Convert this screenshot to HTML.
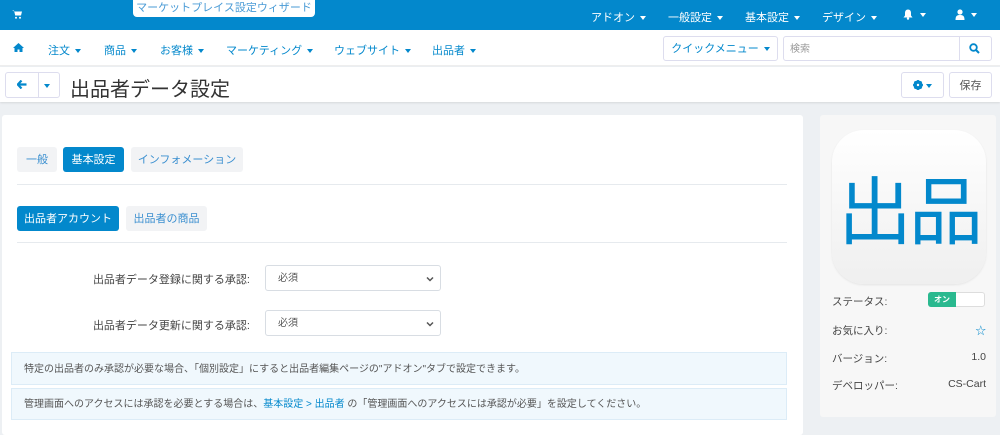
<!DOCTYPE html>
<html><head><meta charset="utf-8"><style>
*{box-sizing:border-box;margin:0;padding:0}
body{width:1000px;height:427px;overflow:hidden;background:#edf0f3;font-family:"Liberation Sans","Noto Sans CJK JP",sans-serif;font-size:11px;color:#333;position:relative}
.abs{position:absolute}
.top{left:0;top:0;width:1000px;height:30px;background:#0388cc;color:#fff}
.car{border-left:3.5px solid transparent;border-right:3.5px solid transparent;border-top:4px solid currentColor;display:inline-block;vertical-align:middle;margin-left:5px}
.nav{left:0;top:30px;width:1000px;height:36px;background:#fff;border-bottom:1px solid #eee;color:#0388cc}
.hdr{left:0;top:67px;width:1000px;height:35px;background:#fff;box-shadow:0 1px 2px rgba(0,0,0,.1)}
.btn{position:absolute;border:1px solid #dde;border-radius:3px;background:#fff}
.card{background:#fff;border-radius:3px}
.tab{position:absolute;height:25px;line-height:25px;border-radius:3px;background:#f2f3f5;color:#3a8fd0;text-align:center;font-size:11px;padding-top:1px}
.tab.on{background:#0388cc;color:#fff}
.sel{position:absolute;left:265px;width:176px;height:26px;border:1px solid #d8dde3;border-radius:3px;padding-left:12px;line-height:26px;color:#555;font-size:10px}
.sel svg{position:absolute;right:6px;top:10px}
.lbl{position:absolute;right:750px;font-size:11px;color:#444}
.info{position:absolute;left:11px;width:776px;background:#f0f8fd;border:1px solid #dcecf7;color:#555;font-size:10px;padding-left:12px}
.row{position:absolute;left:832px;width:154px;font-size:10.5px;color:#444}
</style></head><body>
<div class="abs top">
 <svg class="abs" style="left:12px;top:10px" width="10" height="9" viewBox="0 0 10 9"><path d="M0 0.5h2l1.2 5h5.8l1-4H2.6z" fill="#fff"/><circle cx="4" cy="7.8" r="1" fill="#fff"/><circle cx="8" cy="7.8" r="1" fill="#fff"/></svg>
 <div class="abs" style="left:133px;top:-2px;width:182px;height:19px;background:#fff;border-radius:0 0 4px 4px;color:#4a9bd6;font-size:11px;text-align:center;line-height:21px">マーケットプレイス設定ウィザード</div>
 <div class="abs" style="left:591px;top:9px;font-size:11px">アドオン<span class="car"></span></div>
 <div class="abs" style="left:668px;top:9px;font-size:11px">一般設定<span class="car"></span></div>
 <div class="abs" style="left:745px;top:9px;font-size:11px">基本設定<span class="car"></span></div>
 <div class="abs" style="left:822px;top:9px;font-size:11px">デザイン<span class="car"></span></div>
 <svg class="abs" style="left:903px;top:9px" width="10" height="11" viewBox="0 0 10 11"><path d="M5 0.5C3 0.5 2 2 2 4v2.5L0.5 8.5h9L8 6.5V4C8 2 7 0.5 5 0.5z" fill="#fff"/><circle cx="5" cy="9.6" r="1.2" fill="#fff"/></svg>
 <span class="car abs" style="left:915px;top:13px;color:#fff"></span>
 <svg class="abs" style="left:955px;top:9px" width="10" height="11" viewBox="0 0 10 11"><circle cx="5" cy="3" r="2.6" fill="#fff"/><path d="M0.5 11c0-4 1.5-5 4.5-5s4.5 1 4.5 5z" fill="#fff"/></svg>
 <span class="car abs" style="left:966px;top:13px;color:#fff"></span>
</div>
<div class="abs nav">
 <svg class="abs" style="left:13px;top:13px" width="11" height="9" viewBox="0 0 11 9"><path d="M5.5 0L0 5h1.5v4h3V6.5h2V9h3V5H11z" fill="#0388cc"/></svg>
 <div class="abs" style="left:48px;top:12px">注文<span class="car"></span></div>
 <div class="abs" style="left:104px;top:12px">商品<span class="car"></span></div>
 <div class="abs" style="left:160px;top:12px">お客様<span class="car"></span></div>
 <div class="abs" style="left:226px;top:12px">マーケティング<span class="car"></span></div>
 <div class="abs" style="left:334px;top:12px">ウェブサイト<span class="car"></span></div>
 <div class="abs" style="left:432px;top:12px">出品者<span class="car"></span></div>
 <div class="btn" style="left:663px;top:6px;width:115px;height:25px;line-height:25px;text-align:center">クイックメニュー<span class="car"></span></div>
 <div class="btn" style="left:783px;top:6px;width:209px;height:25px;line-height:25px;padding-left:6px;color:#999;font-size:10px">検索</div>
 <div class="abs" style="left:959px;top:7px;width:1px;height:23px;background:#dde"></div>
 <svg class="abs" style="left:969px;top:13px" width="11" height="11" viewBox="0 0 11 11"><circle cx="4.5" cy="4.5" r="3.3" fill="none" stroke="#0388cc" stroke-width="1.8"/><path d="M7 7l3 3" stroke="#0388cc" stroke-width="2"/></svg>
</div>
<div class="abs hdr">
 <div class="btn" style="left:5px;top:5px;width:55px;height:26px"></div>
 <div class="abs" style="left:38px;top:5px;width:1px;height:26px;background:#dde"></div>
 <svg class="abs" style="left:17px;top:13px" width="10" height="9" viewBox="0 0 10 9"><path d="M4.5 0.5L0.8 4.5l3.7 4M1 4.5h8.5" fill="none" stroke="#0388cc" stroke-width="2.2"/></svg>
 <span class="car abs" style="left:39px;top:17px;color:#0388cc"></span>
 <div class="abs" style="left:70px;top:6px;font-size:20px;color:#333">出品者データ設定</div>
 <div class="btn" style="left:901px;top:5px;width:43px;height:26px"></div>
 <svg class="abs" style="left:913px;top:13px" width="10" height="10" viewBox="0 0 10 10"><circle cx="5" cy="5" r="3.4" fill="none" stroke="#0388cc" stroke-width="2.4"/><path d="M5 0v10M0 5h10M1.5 1.5l7 7M8.5 1.5l-7 7" stroke="#0388cc" stroke-width="1.8"/><circle cx="5" cy="5" r="1.2" fill="#fff"/></svg>
 <span class="car abs" style="left:921px;top:17px;color:#0388cc"></span>
 <div class="btn" style="left:949px;top:5px;width:43px;height:26px;text-align:center;line-height:26px;color:#555">保存</div>
</div>
<div class="abs card" style="left:2px;top:115px;width:801px;height:320px"></div>
<div class="tab" style="left:17px;top:147px;width:40px">一般</div>
<div class="tab on" style="left:63px;top:147px;width:61px">基本設定</div>
<div class="tab" style="left:131px;top:147px;width:112px">インフォメーション</div>
<div class="abs" style="left:17px;top:184px;width:770px;height:1px;background:#e6eaee"></div>
<div class="tab on" style="left:17px;top:206px;width:102px">出品者アカウント</div>
<div class="tab" style="left:126px;top:206px;width:81px">出品者の商品</div>
<div class="abs" style="left:17px;top:242px;width:770px;height:1px;background:#e6eaee"></div>
<div class="lbl" style="top:271px">出品者データ登録に関する承認:</div>
<div class="sel" style="top:265px">必須<svg width="8" height="6" viewBox="0 0 8 6"><path d="M1 1.5l3 3 3-3" fill="none" stroke="#555" stroke-width="1.5"/></svg></div>
<div class="lbl" style="top:317px">出品者データ更新に関する承認:</div>
<div class="sel" style="top:310px">必須<svg width="8" height="6" viewBox="0 0 8 6"><path d="M1 1.5l3 3 3-3" fill="none" stroke="#555" stroke-width="1.5"/></svg></div>
<div class="info" style="top:352px;height:33px;line-height:33px">特定の出品者のみ承認が必要な場合、「個別設定」にすると出品者編集ページの"アドオン"タブで設定できます。</div>
<div class="info" style="top:388px;height:32px;line-height:32px">管理画面へのアクセスには承認を必要とする場合は、<span style="color:#0388cc">基本設定 &gt; 出品者</span> の「管理画面へのアクセスには承認が必要」を設定してください。</div>
<div class="abs" style="left:820px;top:115px;width:176px;height:302px;background:#f7f7f7;border-radius:3px"></div>
<div class="abs" style="left:832px;top:130px;width:154px;height:154px;border-radius:32px;background:linear-gradient(#fff,#efefef);box-shadow:0 1px 2px rgba(0,0,0,.08);color:#0388cc;font-size:74px;line-height:154px;text-align:center;letter-spacing:-3px;font-family:'Noto Sans CJK JP',sans-serif;font-weight:400">出品</div>
<div class="row" style="top:294px">ステータス:</div>
<div class="abs" style="left:928px;top:292px;width:57px;height:15px;border:1px solid #ddd;border-radius:3px;background:#fff"></div>
<div class="abs" style="left:928px;top:292px;width:28px;height:15px;background:#2ab98f;border-radius:3px 0 0 3px;color:#fff;font-size:8px;text-align:center;line-height:15px;font-weight:bold">オン</div>
<div class="row" style="top:323px">お気に入り:<span style="position:absolute;right:0;color:#0388cc">☆</span></div>
<div class="row" style="top:351px">バージョン:<span style="position:absolute;right:0">1.0</span></div>
<div class="row" style="top:378px">デベロッパー:<span style="position:absolute;right:0">CS-Cart</span></div>
</body></html>
